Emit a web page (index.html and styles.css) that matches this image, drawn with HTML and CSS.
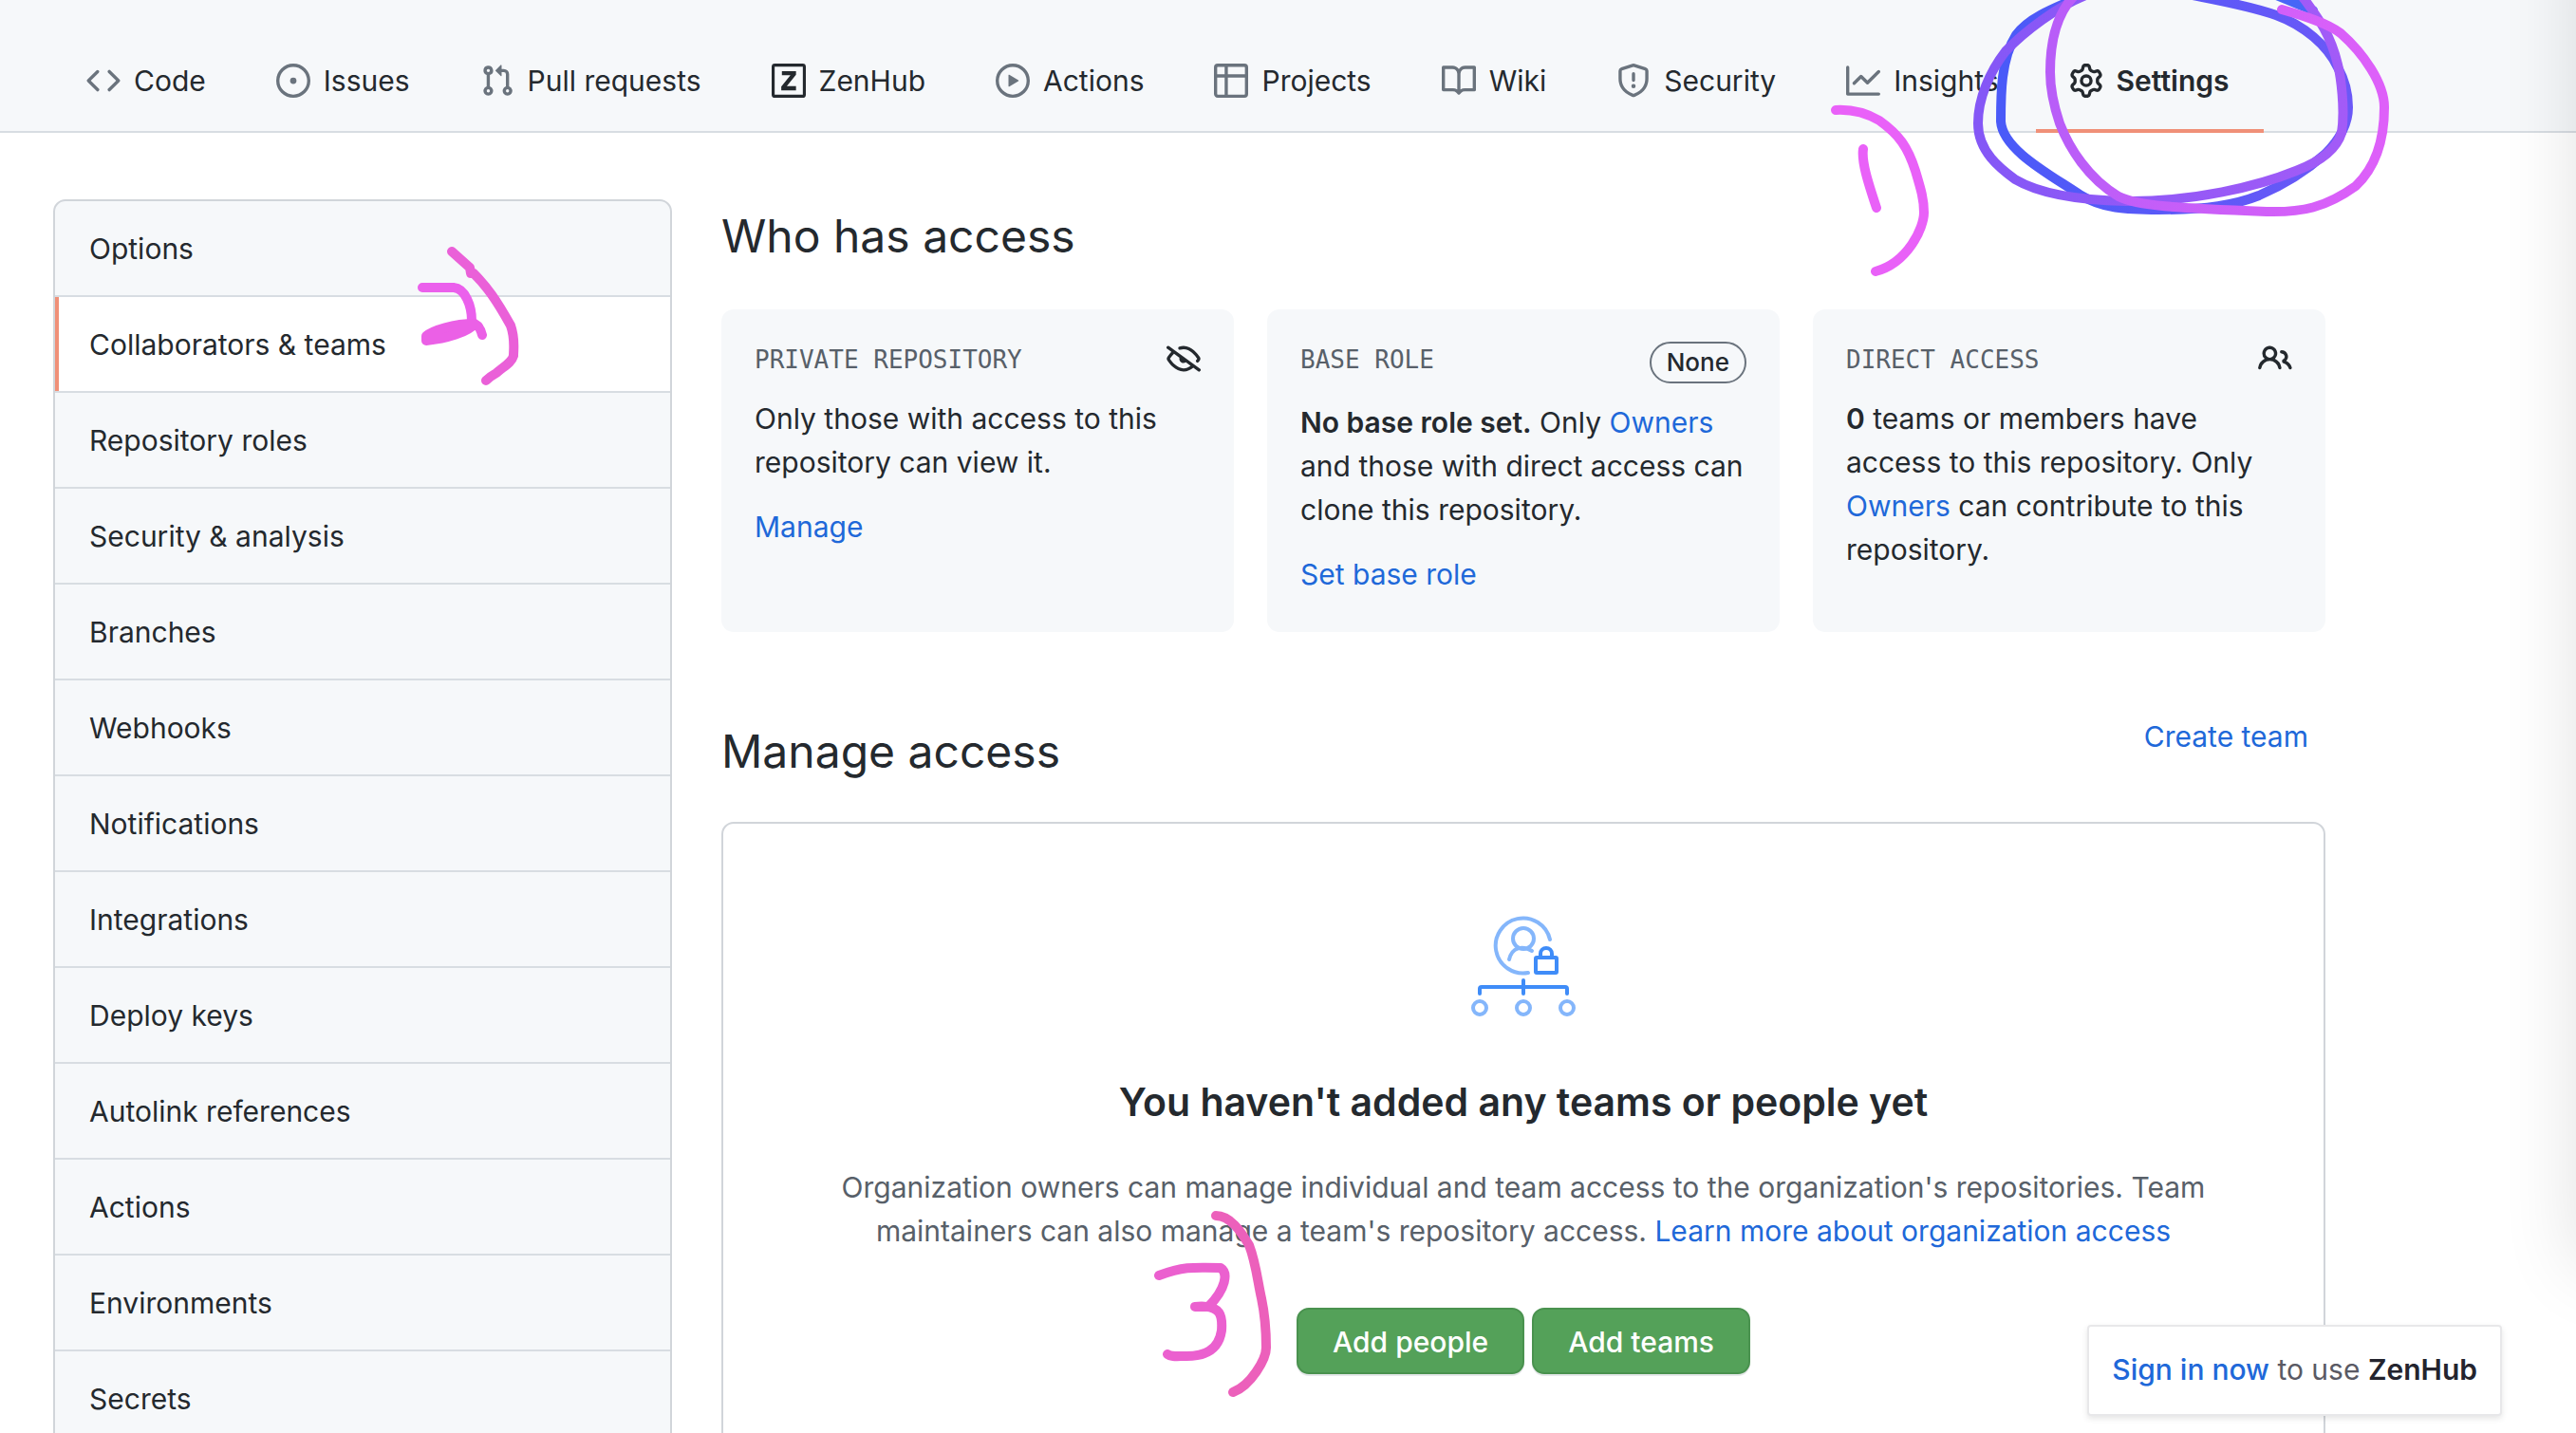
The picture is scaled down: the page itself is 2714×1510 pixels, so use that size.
FILE: index.html
```html
<!DOCTYPE html>
<html lang="en">
<head>
<meta charset="utf-8">
<meta name="viewport" content="width=device-width, initial-scale=1">
<title>Collaborators &amp; teams</title>
<link rel="stylesheet" href="styles.css">
</head>
<body>
<nav class="repo-nav" aria-label="Repository">
  <a class="tab" href="#"><svg class="icon" viewBox="0 0 16 16"><path d="M4.72 3.22a.75.75 0 011.06 1.06L2.06 8l3.72 3.72a.75.75 0 11-1.06 1.06L.47 8.53a.75.75 0 010-1.06l4.25-4.25zm6.56 0a.75.75 0 10-1.06 1.06L13.94 8l-3.72 3.72a.75.75 0 101.06 1.06l4.25-4.25a.75.75 0 000-1.06l-4.25-4.25z"/></svg><span>Code</span></a>
  <a class="tab" href="#"><svg class="icon" viewBox="0 0 16 16"><path d="M8 9.5a1.5 1.5 0 100-3 1.5 1.5 0 000 3z"/><path d="M8 0a8 8 0 100 16A8 8 0 008 0zM1.5 8a6.5 6.5 0 1113 0 6.5 6.5 0 01-13 0z"/></svg><span>Issues</span></a>
  <a class="tab" href="#"><svg class="icon" viewBox="0 0 16 16"><path d="M7.177 3.073L9.573.677A.25.25 0 0110 .854v4.792a.25.25 0 01-.427.177L7.177 3.427a.25.25 0 010-.354zM3.75 2.5a.75.75 0 100 1.5.75.75 0 000-1.5zm-2.25.75a2.25 2.25 0 113 2.122v5.256a2.251 2.251 0 11-1.5 0V5.372A2.25 2.25 0 011.5 3.25zM11 2.5h-1V4h1a1 1 0 011 1v5.628a2.251 2.251 0 101.5 0V5A2.5 2.5 0 0011 2.5zm1 10.25a.75.75 0 111.5 0 .75.75 0 01-1.5 0zM3.75 12a.75.75 0 100 1.5.75.75 0 000-1.5z"/></svg><span>Pull requests</span></a>
  <a class="tab" href="#"><svg class="icon icon-dark" viewBox="0 0 16 16"><path d="M1.5 0h13A1.500 1.500 0 0116 1.500v13a1.500 1.500 0 01-1.500 1.500h-13A1.500 1.500 0 010 14.500v-13A1.500 1.500 0 011.500 0zM1.400 1.400v13.200h13.200V1.400zM4.800 3.500h6.600v1.700L7.100 10.600h4.300v1.900H4.500v-1.700l4.300-5.400h-4z"/></svg><span>ZenHub</span></a>
  <a class="tab" href="#"><svg class="icon" viewBox="0 0 16 16"><path d="M1.5 8a6.5 6.5 0 1113 0 6.5 6.5 0 01-13 0zM8 0a8 8 0 100 16A8 8 0 008 0zM6.379 5.227A.25.25 0 006 5.442v5.117a.25.25 0 00.379.214l4.264-2.559a.25.25 0 000-.428L6.379 5.227z"/></svg><span>Actions</span></a>
  <a class="tab" href="#"><svg class="icon" viewBox="0 0 16 16"><path d="M1.75 0A1.75 1.75 0 000 1.75v12.5C0 15.216.784 16 1.75 16h12.5A1.75 1.75 0 0016 14.25V1.75A1.75 1.75 0 0014.25 0H1.75zM1.5 1.75a.25.25 0 01.25-.25H5V5H1.5V1.75zM6.500 1.500v3.500h8V1.750a.25.25 0 00-.25-.25H6.500zM14.500 6.500h-8v8h7.750a.25.25 0 00.25-.25V6.500zM5 14.500v-8H1.500v7.750c0 .138.112.25.25.25H5z"/></svg><span>Projects</span></a>
  <a class="tab" href="#"><svg class="icon" viewBox="0 0 16 16"><path d="M0 1.75A.75.75 0 01.75 1h4.253c1.227 0 2.317.59 3 1.501A3.744 3.744 0 0111.006 1h4.245a.75.75 0 01.75.75v10.5a.75.75 0 01-.75.75h-4.507a2.25 2.25 0 00-1.591.659l-.622.621a.75.75 0 01-1.060 0l-.622-.621A2.250 2.250 0 005.258 13H.75a.75.75 0 01-.75-.75V1.75zm8.755 3a2.25 2.25 0 012.25-2.25H14.5v9h-3.757c-.71 0-1.4.201-1.992.572l.004-7.322zm-1.504 7.324l.004-5.073-.002-2.253A2.25 2.25 0 005.003 2.5H1.5v9h3.757a3.75 3.75 0 011.994.574z"/></svg><span>Wiki</span></a>
  <a class="tab" href="#"><svg class="icon" viewBox="0 0 16 16"><path d="M7.467.133a1.75 1.75 0 011.066 0l5.25 1.68A1.75 1.75 0 0115 3.48V7c0 1.566-.32 3.182-1.303 4.682-.983 1.498-2.585 2.813-5.032 3.855a1.7 1.7 0 01-1.33 0c-2.447-1.042-4.049-2.357-5.032-3.855C1.32 10.182 1 8.566 1 7V3.48a1.75 1.75 0 011.217-1.667l5.25-1.68zm.61 1.429a.25.25 0 00-.153 0l-5.25 1.68a.25.25 0 00-.174.238V7c0 1.358.275 2.666 1.057 3.86.784 1.194 2.121 2.34 4.366 3.297a.2.2 0 00.154 0c2.245-.956 3.582-2.104 4.366-3.298C13.225 9.666 13.5 8.36 13.5 7V3.48a.25.25 0 00-.174-.237l-5.25-1.68zM9 10.5a1 1 0 11-2 0 1 1 0 012 0zm-.25-5.75a.75.75 0 10-1.5 0v3a.75.75 0 001.5 0v-3z"/></svg><span>Security</span></a>
  <a class="tab" href="#"><svg class="icon" viewBox="0 0 16 16"><path d="M1.5 1.75a.75.75 0 00-1.5 0v12.5c0 .414.336.75.75.75h14.5a.75.75 0 000-1.5H1.5V1.75zm14.28 2.53a.75.75 0 00-1.06-1.06L10 7.94 7.53 5.47a.75.75 0 00-1.06 0L3.22 8.72a.75.75 0 001.06 1.06L7 7.06l2.47 2.47a.75.75 0 001.06 0l5.25-5.25z"/></svg><span>Insights</span></a>
  <a class="tab tab-current" href="#" aria-current="page"><svg class="icon icon-dark" viewBox="0 0 16 16"><path d="M7.429 1.525a6.593 6.593 0 011.142 0c.036.003.108.036.137.146l.289 1.105c.147.56.55.967.997 1.189.174.086.341.183.501.29.417.278.97.423 1.53.27l1.102-.303c.11-.03.175.016.195.046.219.31.41.641.573.989.014.031.022.11-.059.19l-.815.806c-.411.406-.562.957-.53 1.456a4.588 4.588 0 010 .582c-.032.499.119 1.05.53 1.456l.815.806c.08.08.073.159.059.19a6.494 6.494 0 01-.573.99c-.02.029-.086.074-.195.045l-1.103-.303c-.559-.153-1.112-.008-1.529.27-.16.107-.327.204-.5.29-.449.222-.851.628-.998 1.189l-.289 1.105c-.029.11-.101.143-.137.146a6.613 6.613 0 01-1.142 0c-.036-.003-.108-.037-.137-.146l-.289-1.105c-.147-.56-.55-.967-.997-1.189a4.502 4.502 0 01-.501-.29c-.417-.278-.97-.423-1.53-.27l-1.102.303c-.11.03-.175-.016-.195-.046a6.492 6.492 0 01-.573-.989c-.014-.031-.022-.11.059-.19l.815-.806c.411-.406.562-.957.53-1.456a4.587 4.587 0 010-.582c.032-.499-.119-1.05-.53-1.456l-.815-.806c-.08-.08-.073-.159-.059-.19a6.44 6.44 0 01.573-.99c.02-.029.086-.075.195-.045l1.103.303c.559.153 1.112.008 1.529-.27.16-.107.327-.204.5-.29.449-.222.851-.628.998-1.189l.289-1.105c.029-.11.101-.143.137-.146zM8 0c-.236 0-.47.01-.701.03-.743.065-1.29.615-1.458 1.261l-.29 1.106c-.017.066-.078.158-.211.224a5.994 5.994 0 00-.668.386c-.123.082-.233.09-.3.071L3.27 2.776c-.644-.177-1.392.02-1.82.63a7.977 7.977 0 00-.704 1.217c-.315.675-.111 1.422.363 1.891l.815.806c.05.048.098.147.088.294a6.084 6.084 0 000 .772c.01.147-.038.246-.088.294l-.815.806c-.474.469-.678 1.216-.363 1.891.2.428.436.835.704 1.218.428.609 1.176.806 1.82.63l1.103-.303c.066-.019.176-.011.299.071.213.143.436.272.668.386.133.066.194.158.212.224l.289 1.106c.169.646.715 1.196 1.458 1.26a8.094 8.094 0 001.402 0c.743-.064 1.29-.614 1.458-1.26l.29-1.106c.017-.066.078-.158.211-.224a5.98 5.98 0 00.668-.386c.123-.082.233-.09.3-.071l1.102.302c.644.177 1.392-.02 1.82-.63.268-.382.505-.789.704-1.217.315-.675.111-1.422-.364-1.891l-.814-.806c-.05-.048-.098-.147-.088-.294a6.1 6.1 0 000-.772c-.01-.147.039-.246.088-.294l.814-.806c.475-.469.679-1.216.364-1.891a7.992 7.992 0 00-.704-1.218c-.428-.609-1.176-.806-1.82-.63l-1.103.303c-.066.019-.176.011-.299-.071a5.991 5.991 0 00-.668-.386c-.133-.066-.194-.158-.212-.224L10.16 1.29C9.99.645 9.444.095 8.701.031A8.094 8.094 0 008 0zm1.500 8a1.500 1.500 0 11-3 0 1.500 1.500 0 013 0zM11 8a3 3 0 11-6 0 3 3 0 016 0z"/></svg><span>Settings</span></a>
</nav>

<div class="layout">
  <nav class="side-menu" aria-label="Settings">
    <a class="side-item" href="#">Options</a>
    <a class="side-item side-current" href="#" aria-current="page">Collaborators &amp; teams</a>
    <a class="side-item" href="#">Repository roles</a>
    <a class="side-item" href="#">Security &amp; analysis</a>
    <a class="side-item" href="#">Branches</a>
    <a class="side-item" href="#">Webhooks</a>
    <a class="side-item" href="#">Notifications</a>
    <a class="side-item" href="#">Integrations</a>
    <a class="side-item" href="#">Deploy keys</a>
    <a class="side-item" href="#">Autolink references</a>
    <a class="side-item" href="#">Actions</a>
    <a class="side-item" href="#">Environments</a>
    <a class="side-item" href="#">Secrets</a>
  </nav>

  <main class="content">
    <h2 class="title">Who has access</h2>
    <div class="cards">
      <section class="card">
        <header class="card-head">
          <h3 class="card-title">Private repository</h3>
          <svg class="icon icon-dark" viewBox="0 0 16 16"><path d="M.143 2.31a.75.75 0 011.047-.167l14.5 10.5a.75.75 0 11-.88 1.214l-2.248-1.628C11.346 13.19 9.792 14 8 14c-1.981 0-3.67-.992-4.933-2.078C1.797 10.832.88 9.577.43 8.9a1.618 1.618 0 010-1.797c.353-.533.995-1.42 1.868-2.305L.31 3.357A.75.75 0 01.143 2.31zm3.386 3.378a14.21 14.21 0 00-1.85 2.244.12.12 0 00-.022.068c0 .021.006.045.022.068.412.621 1.242 1.75 2.366 2.717C5.175 11.758 6.527 12.5 8 12.5c1.195 0 2.31-.488 3.29-1.191L9.063 9.695A2 2 0 016.058 7.52l-2.53-1.832zM8 3.5c-.516 0-1.017.09-1.499.251a.75.75 0 11-.473-1.423A6.23 6.23 0 018 2c1.981 0 3.67.992 4.933 2.078 1.27 1.091 2.187 2.345 2.637 3.023a1.62 1.62 0 010 1.798c-.11.166-.248.365-.41.587a.75.75 0 11-1.21-.887c.148-.201.272-.382.371-.53a.119.119 0 000-.137c-.412-.621-1.242-1.75-2.366-2.717C10.825 4.242 9.473 3.5 8 3.5z"/></svg>
        </header>
        <p class="card-text">Only those with access to this repository can view it.</p>
        <a class="link" href="#">Manage</a>
      </section>
      <section class="card">
        <header class="card-head">
          <h3 class="card-title">Base role</h3>
          <span class="badge">None</span>
        </header>
        <p class="card-text"><strong>No base role set.</strong> Only <a class="link" href="#">Owners</a> and those with direct access can clone this repository.</p>
        <a class="link" href="#">Set base role</a>
      </section>
      <section class="card">
        <header class="card-head">
          <h3 class="card-title">Direct access</h3>
          <svg class="icon icon-dark" viewBox="0 0 16 16"><path d="M5.5 3.5a2 2 0 100 4 2 2 0 000-4zM2 5.5a3.5 3.5 0 115.898 2.549 5.507 5.507 0 013.034 4.084.75.75 0 11-1.482.235 4.001 4.001 0 00-7.9 0 .75.75 0 01-1.482-.236A5.507 5.507 0 013.102 8.05 3.49 3.49 0 012 5.5zM11 4a.75.75 0 100 1.5 1.5 1.5 0 01.666 2.844.75.75 0 00-.416.672v.352a.75.75 0 00.574.73c1.2.289 2.162 1.2 2.522 2.372a.75.75 0 101.434-.44 5.01 5.01 0 00-2.56-3.012A3 3 0 0011 4z"/></svg>
        </header>
        <p class="card-text"><strong>0</strong> teams or members have access to this repository. Only <a class="link" href="#">Owners</a> can contribute to this repository.</p>
      </section>
    </div>

    <div class="manage-head">
      <h2 class="title">Manage access</h2>
      <a class="link create-team" href="#">Create team</a>
    </div>
    <section class="blank">
      <svg class="blank-art" viewBox="0 0 110 110" fill="none" stroke-width="4" stroke-linecap="round">
        <g stroke="#84b6fb">
          <path d="M83 26A29 29 0 1 0 60 61"/>
          <circle cx="55" cy="25" r="11"/>
          <path d="M40 47C43 34 54 32 64 38"/>
          <circle cx="9" cy="98" r="7"/>
          <circle cx="55" cy="98" r="7"/>
          <circle cx="101" cy="98" r="7"/>
        </g>
        <g stroke="#3f8cf8">
          <rect x="68" y="45" width="22" height="16" rx="1"/>
          <path d="M73 44V41a6 6 0 0 1 12 0v3M55 69v14M9 83v-5q0-2 2-2h88q2 0 2 2v5"/>
        </g>
      </svg>
      <h3 class="blank-title">You haven't added any teams or people yet</h3>
      <p class="blank-text">Organization owners can manage individual and team access to the organization's repositories. Team maintainers can also manage a team's repository access. <a class="link" href="#">Learn more about organization access</a></p>
      <div class="actions">
        <button class="btn" type="button">Add people</button>
        <button class="btn" type="button">Add teams</button>
      </div>
    </section>
  </main>
</div>

<div class="edge-shade"></div>
<aside class="toast"><a class="link" href="#">Sign in now</a> to use <strong>ZenHub</strong></aside>

<svg class="ink" viewBox="0 0 2714 1510" width="2714" height="1510" fill="none" stroke-width="10" stroke-linecap="round" stroke-linejoin="round" aria-hidden="true">
  <defs>
    <linearGradient id="loop1" gradientUnits="userSpaceOnUse" x1="2108" y1="0" x2="2475" y2="0"><stop offset="0" stop-color="#4a5af8"/><stop offset="1" stop-color="#6b58f7"/></linearGradient>
    <linearGradient id="loop2" gradientUnits="userSpaceOnUse" x1="2084" y1="0" x2="2475" y2="0"><stop offset="0" stop-color="#8457f6"/><stop offset="1" stop-color="#a35bf7"/></linearGradient>
    <linearGradient id="loop3" gradientUnits="userSpaceOnUse" x1="2160" y1="0" x2="2512" y2="0"><stop offset="0" stop-color="#b85df8"/><stop offset="1" stop-color="#de60f9"/></linearGradient>
  </defs>
  <path stroke="#4766f7" d="M2437 11Q2420 4 2396 -6"/>
  <path stroke="url(#loop1)" d="M2191 -3C2160 10 2136 20 2124 37C2108 62 2108 100 2108 128C2110 158 2160 184 2191 205C2215 220 2240 221 2274 221C2325 221 2355 216 2380 206C2410 193 2432 178 2450 162C2465 147 2474 130 2474 113C2474 95 2468 80 2463 71C2452 48 2428 27 2398 16C2370 6 2335 0 2305 -6"/>
  <path stroke="url(#loop2)" d="M2200 -6C2168 6 2132 34 2113 54C2096 76 2084 104 2084 130C2084 160 2108 178 2123 189C2150 205 2190 211 2240 212C2310 213 2380 196 2419 180C2440 172 2461 160 2467 140C2471 115 2466 80 2463 68C2455 34 2440 16 2424 -6"/>
  <path stroke="url(#loop3)" d="M2187 -6C2164 16 2160 50 2160 76C2160 96 2164 112 2170 130C2180 156 2200 188 2232 207C2252 217 2290 219 2388 223C2425 224 2450 219 2482 196C2503 176 2512 147 2512 113C2512 88 2490 56 2466 35C2452 24 2425 16 2404 10"/>
  <path stroke="#e961f8" d="M1934 116C1952 115 1966 119 1980 127C2001 142 2010 155 2018 180C2024 200 2027 210 2027 224C2027 240 2010 277 1976 286M1963 157C1961 170 1968 192 1977 219"/>
  <path stroke="#eb60ec" d="M445 303H478C490 304 497 322 497 338"/>
  <path stroke="#eb60e6" fill="#eb60e6" d="M500 341C478 341 456 348 449 354V359C470 357 494 350 500 341Q506 344 508 353"/>
  <path stroke="#ea60d8" d="M476 265L495 282L496 288L499 288C513 302 523 316 538 343C543 357 541 367 541 375C539 382 531 386 523 393Q516 397 512 401"/>
  <path stroke="#eb60cf" d="M1221 1344C1245 1335 1255 1335 1286 1336C1294 1341 1292 1358 1273 1377H1259C1288 1374 1288 1388 1287 1402C1284 1422 1270 1429 1250 1429C1240 1429 1234 1430 1230 1427"/>
  <path stroke="#ec60bb" d="M1281 1281C1296 1281 1307 1297 1316 1312C1323 1330 1325 1350 1329 1368C1333 1387 1334 1400 1334 1420C1334 1432 1318 1460 1299 1467"/>
</svg>
</body>
</html>
```
FILE: styles.css
```css
* {
  box-sizing: border-box;
}

body {
  margin: 0;
  height: 100vh;
  overflow: hidden;
  position: relative;
  background: #fff;
  color: #24292e;
  font: 30px/46px Inter, "Liberation Sans", sans-serif;
}

h2, h3, p {
  margin: 0;
}

strong {
  font-weight: 600;
}

a {
  color: inherit;
  text-decoration: none;
}

.link {
  color: #2068d9;
}

.icon {
  width: 36px;
  height: 36px;
  flex: none;
  fill: #6a737d;
  fill-rule: evenodd;
}

.icon-dark {
  fill: #24292e;
}

/* Repository tabs */
.repo-nav {
  display: flex;
  gap: 3px;
  height: 140px;
  padding: 34px 56px 0;
  background: #f6f8fa;
  border-bottom: 2px solid #d8dde2;
}

.tab {
  display: flex;
  align-items: center;
  gap: 14px;
  height: 106px;
  padding: 0 36px 0 35px;
  white-space: nowrap;
  border-bottom: 4px solid transparent;
}

.tab-current {
  font-weight: 600;
  border-bottom-color: #f09078;
}

/* Page columns */
.layout {
  display: flex;
  align-items: flex-start;
  gap: 52px;
  padding: 70px 264px 0 56px;
}

.side-menu {
  flex: none;
  width: 652px;
  background: #f6f8fa;
  border: 2px solid #d1d5da;
  border-radius: 13px;
  overflow: hidden;
}

.side-item {
  display: block;
  padding: 27px 36px 26px;
  border-bottom: 2px solid #d8dde2;
}

.side-current {
  background: #fff;
  box-shadow: inset 4px 0 #f09078;
}

.content {
  flex: 1;
  min-width: 0;
}

.title {
  font-size: 48px;
  line-height: 78px;
  font-weight: 400;
}

.cards {
  display: grid;
  grid-template-columns: repeat(3, 1fr);
  gap: 35px;
  margin-top: 38px;
}

.card {
  padding: 34px 35px 38px;
  background: #f6f8fa;
  border-radius: 13px;
}

.card-head {
  display: flex;
  justify-content: space-between;
  align-items: flex-start;
  min-height: 40px;
  margin-bottom: 18px;
}

.card-title {
  color: #586069;
  font: 26px/38px "DejaVu Sans Mono", monospace;
  text-transform: uppercase;
}

.badge {
  padding: 0 16px;
  border: 2px solid #6a737d;
  border-radius: 22px;
  font-size: 26px;
  line-height: 40px;
  font-weight: 500;
}

.card-text + .link {
  display: block;
  margin-top: 22px;
}

/* Manage access */
.manage-head {
  display: flex;
  justify-content: space-between;
  margin-top: 87px;
}

.create-team {
  padding-right: 18px;
}

.blank {
  display: flex;
  flex-direction: column;
  align-items: center;
  margin-top: 35px;
  padding: 96px 88px;
  border: 2px solid #d1d5da;
  border-radius: 13px;
  text-align: center;
}

.blank-art {
  width: 110px;
  height: 110px;
}

.blank-title {
  margin-top: 54px;
  font-size: 41px;
  line-height: 66px;
  font-weight: 600;
}

.blank-text {
  margin-top: 34px;
  color: #586069;
}

.actions {
  display: flex;
  gap: 8px;
  margin-top: 58px;
}

.btn {
  height: 70px;
  padding: 2px 36px 0;
  background: #54a159;
  border: 2px solid #4a924f;
  border-radius: 13px;
  box-shadow: 0 2px #e6e8ea;
  color: #fff;
  font: inherit;
  font-weight: 500;
}

/* Overlays */
.edge-shade {
  position: absolute;
  top: -80px;
  bottom: 174px;
  left: 100%;
  width: 80px;
  box-shadow: 0 0 80px rgba(0, 0, 0, 0.12);
}

.toast {
  position: absolute;
  right: 78px;
  bottom: 18px;
  padding: 22px 24px 24px;
  background: #fff;
  border: 2px solid #e8e8ea;
  border-radius: 4px;
  box-shadow: 0 3px 6px rgba(0, 0, 0, 0.1);
  color: #5a5a64;
}

.toast .link {
  font-weight: 500;
}

.toast strong {
  color: #24242e;
}

.ink {
  position: absolute;
  top: 0;
  left: 0;
  pointer-events: none;
}
```
